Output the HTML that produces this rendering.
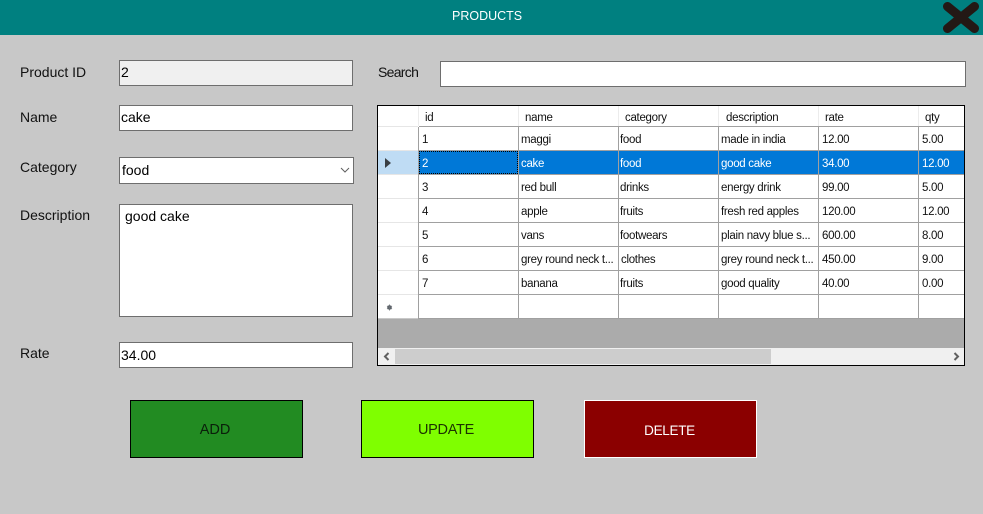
<!DOCTYPE html>
<html><head><meta charset="utf-8"><title>Products</title>
<style>
html,body{margin:0;padding:0}
body{width:983px;height:514px;background:#c8c8c8;position:relative;overflow:hidden;font-family:"Liberation Sans",sans-serif;color:#000}
.a{position:absolute;box-sizing:border-box;white-space:nowrap}
.l{font-size:14px;color:#111;line-height:18px}
.i{background:#fff;border:1px solid #6e6e6e;font-size:14px;line-height:22px;padding-left:1px;color:#000}
.h{font-size:11.5px;letter-spacing:-.3px;line-height:16px;color:#111;top:110px}
.c{font-size:11.5px;letter-spacing:-.3px;line-height:16px;color:#111;margin-top:1px}
.s{color:#fff}
.v{width:1px;background:#a0a0a0;top:127px;height:192px}
.vh{width:1px;background:#ececec;top:106px;height:20px}
.r{left:419px;width:545px;height:1px;background:#a0a0a0}
.rh{left:378px;width:40px;height:1px;background:#e6e6e6}
.b{font-size:14.5px;text-align:center;line-height:59px;height:58px;width:173px;top:400px;padding-right:3px}
</style></head><body>
<div class="a" style="left:0;top:0;width:983px;height:35px;background:#008080"></div>
<div class="a" style="left:452px;top:8px;font-size:12.5px;line-height:16px;color:#fff">PRODUCTS</div>
<svg class="a" style="left:943px;top:2px" width="36" height="31" viewBox="0 0 36 31"><path d="M4.5 4.5 L31.5 26.5 M31.5 4.5 L4.5 26.5" stroke="#231815" stroke-width="9" stroke-linecap="round"/></svg>

<div class="a l" style="left:20px;top:63px">Product ID</div>
<div class="a i" style="left:119px;top:60px;width:234px;height:26px;background:#f0f0f0">2</div>
<div class="a l" style="left:20px;top:108px">Name</div>
<div class="a i" style="left:119px;top:105px;width:234px;height:26px">cake</div>
<div class="a l" style="left:20px;top:158px">Category</div>
<div class="a i" style="left:119px;top:157px;width:235px;height:27px;padding-left:2px;line-height:25px">food</div>
<svg class="a" style="left:340px;top:167px" width="10" height="7" viewBox="0 0 10 7"><path d="M1 1 L5 5 L9 1" fill="none" stroke="#606060" stroke-width="1"/></svg>
<div class="a l" style="left:20px;top:206px">Description</div>
<div class="a i" style="left:119px;top:204px;width:234px;height:113px;padding:0 0 0 5px">good cake</div>
<div class="a l" style="left:20px;top:344px">Rate</div>
<div class="a i" style="left:119px;top:342px;width:234px;height:26px;line-height:24px">34.00</div>
<div class="a l" style="left:378px;top:63px;letter-spacing:-.7px">Search</div>
<div class="a i" style="left:440px;top:61px;width:526px;height:26px"></div>

<div class="a" style="left:377px;top:105px;width:588px;height:261px;background:#ababab;border:1px solid #000"></div>
<div class="a" style="left:378px;top:106px;width:586px;height:213px;background:#fff"></div>
<div class="a" style="left:378px;top:151px;width:40px;height:23px;background:#bfdcf4"></div>
<div class="a" style="left:419px;top:151px;width:545px;height:23px;background:#0078d7"></div>
<div class="a" style="left:419px;top:151px;width:99px;height:23px;border:1px dotted #000"></div>
<div class="a vh" style="left:418px"></div><div class="a vh" style="left:518px"></div><div class="a vh" style="left:618px"></div><div class="a vh" style="left:718px"></div><div class="a vh" style="left:818px"></div><div class="a vh" style="left:918px"></div>
<div class="a v" style="left:418px"></div>
<div class="a v" style="left:518px"></div>
<div class="a v" style="left:618px"></div>
<div class="a v" style="left:718px"></div>
<div class="a v" style="left:818px"></div>
<div class="a v" style="left:918px"></div>
<div class="a r" style="top:126px"></div>
<div class="a r" style="top:150px"></div>
<div class="a r" style="top:174px"></div>
<div class="a r" style="top:198px"></div>
<div class="a r" style="top:222px"></div>
<div class="a r" style="top:246px"></div>
<div class="a r" style="top:270px"></div>
<div class="a r" style="top:294px"></div>
<div class="a r" style="top:318px"></div>
<div class="a rh" style="top:126px"></div><div class="a rh" style="top:150px"></div><div class="a rh" style="top:174px"></div><div class="a rh" style="top:198px"></div><div class="a rh" style="top:222px"></div><div class="a rh" style="top:246px"></div><div class="a rh" style="top:270px"></div><div class="a rh" style="top:294px"></div><div class="a rh" style="top:318px;background:#c8c8c8"></div>
<svg class="a" style="left:385px;top:158px" width="6" height="10" viewBox="0 0 6 10"><path d="M0 0 L6 5 L0 10 Z" fill="#3a3f44"/></svg>
<svg class="a" style="left:386px;top:304px" width="7" height="7" viewBox="0 0 7 7"><circle cx="3.5" cy="3.5" r="2.2" fill="#4a5056"/><path d="M3.5 .5 V6.5 M1 2 L6 5 M6 2 L1 5" stroke="#6a7076" stroke-width=".8"/></svg>

<div class="a h" style="left:425px">id</div>
<div class="a h" style="left:525px">name</div>
<div class="a h" style="left:625px">category</div>
<div class="a h" style="left:726px">description</div>
<div class="a h" style="left:825px">rate</div>
<div class="a h" style="left:925px">qty</div>

<div class="a c" style="left:422px;top:131px">1</div><div class="a c" style="left:521px;top:131px">maggi</div><div class="a c" style="left:620px;top:131px">food</div><div class="a c" style="left:721px;top:131px">made in india</div><div class="a c" style="left:822px;top:131px">12.00</div><div class="a c" style="left:922px;top:131px">5.00</div>
<div class="a c s" style="left:422px;top:155px">2</div><div class="a c s" style="left:521px;top:155px">cake</div><div class="a c s" style="left:620px;top:155px">food</div><div class="a c s" style="left:721px;top:155px">good cake</div><div class="a c s" style="left:822px;top:155px">34.00</div><div class="a c s" style="left:922px;top:155px">12.00</div>
<div class="a c" style="left:422px;top:179px">3</div><div class="a c" style="left:521px;top:179px">red bull</div><div class="a c" style="left:620px;top:179px">drinks</div><div class="a c" style="left:721px;top:179px">energy drink</div><div class="a c" style="left:822px;top:179px">99.00</div><div class="a c" style="left:922px;top:179px">5.00</div>
<div class="a c" style="left:422px;top:203px">4</div><div class="a c" style="left:521px;top:203px">apple</div><div class="a c" style="left:620px;top:203px">fruits</div><div class="a c" style="left:721px;top:203px">fresh red apples</div><div class="a c" style="left:822px;top:203px">120.00</div><div class="a c" style="left:922px;top:203px">12.00</div>
<div class="a c" style="left:422px;top:227px">5</div><div class="a c" style="left:521px;top:227px">vans</div><div class="a c" style="left:620px;top:227px">footwears</div><div class="a c" style="left:721px;top:227px">plain navy blue s...</div><div class="a c" style="left:822px;top:227px">600.00</div><div class="a c" style="left:922px;top:227px">8.00</div>
<div class="a c" style="left:422px;top:251px">6</div><div class="a c" style="left:521px;top:251px">grey round neck t...</div><div class="a c" style="left:621px;top:251px">clothes</div><div class="a c" style="left:721px;top:251px">grey round neck t...</div><div class="a c" style="left:822px;top:251px">450.00</div><div class="a c" style="left:922px;top:251px">9.00</div>
<div class="a c" style="left:422px;top:275px">7</div><div class="a c" style="left:521px;top:275px">banana</div><div class="a c" style="left:620px;top:275px">fruits</div><div class="a c" style="left:721px;top:275px">good quality</div><div class="a c" style="left:822px;top:275px">40.00</div><div class="a c" style="left:922px;top:275px">0.00</div>

<div class="a" style="left:378px;top:348px;width:586px;height:17px;background:#f0f0f0"></div>
<div class="a" style="left:395px;top:349px;width:376px;height:15px;background:#cdcdcd"></div>
<svg class="a" style="left:383px;top:352px" width="7" height="9" viewBox="0 0 7 9"><path d="M5.5 1 L2 4.5 L5.5 8" fill="none" stroke="#606060" stroke-width="2"/></svg>
<svg class="a" style="left:953px;top:352px" width="7" height="9" viewBox="0 0 7 9"><path d="M1.5 1 L5 4.5 L1.5 8" fill="none" stroke="#606060" stroke-width="2"/></svg>

<div class="a b" style="left:130px;background:#228b22;border:1px solid #000;color:#0a1f0a">ADD</div>
<div class="a b" style="left:361px;background:#7fff00;border:1px solid #000;color:#1c3300;letter-spacing:-.3px">UPDATE</div>
<div class="a b" style="left:584px;background:#8b0000;border:1px solid #fff;color:#fff;font-size:13.5px;letter-spacing:-.3px;padding-right:2px">DELETE</div>
</body></html>
